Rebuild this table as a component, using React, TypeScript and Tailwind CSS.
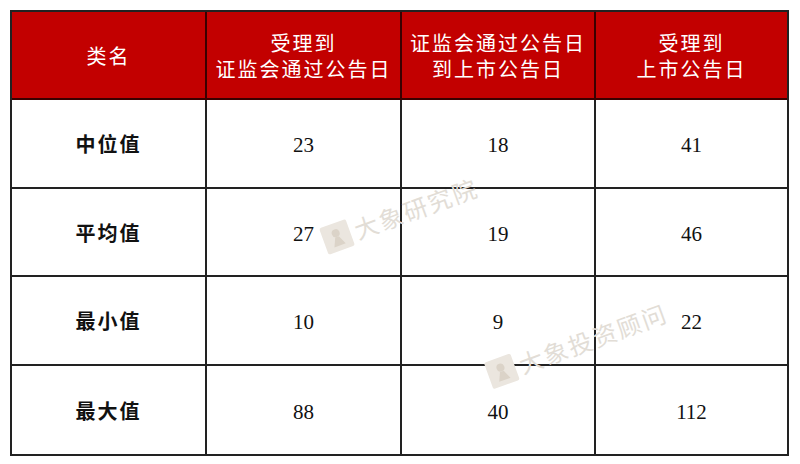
import React from 'react'

interface Row {
  name: string
  a: number
  b: number
  c: number
}

const rows: Row[] = [
  { name: '中位值', a: 23, b: 18, c: 41 },
  { name: '平均值', a: 27, b: 19, c: 46 },
  { name: '最小值', a: 10, b: 9, c: 22 },
  { name: '最大值', a: 88, b: 40, c: 112 },
]

const headers: string[][] = [
  ['类名'],
  ['受理到', '证监会通过公告日'],
  ['证监会通过公告日', '到上市公告日'],
  ['受理到', '上市公告日'],
]

const cjk = "font-['Liberation_Serif','Noto_Sans_CJK_SC',serif]"

function Watermark({ text, className }: { text: string; className: string }) {
  return (
    <div className={`absolute flex items-center gap-1 -rotate-[20deg] pointer-events-none select-none ${className}`}>
      <svg width="30" height="30" viewBox="0 0 30 30">
        <rect x="1" y="1" width="28" height="28" rx="2" fill="#ebe6df" />
        <path d="M9 24 L13 15 L17 15 L21 24 Z" fill="#dbd3c8" />
        <circle cx="15" cy="11" r="4" fill="#dbd3c8" />
      </svg>
      <span className="text-[24px] tracking-[2px] text-[#e2ddd6] font-['Noto_Sans_CJK_SC',sans-serif]">{text}</span>
    </div>
  )
}

export default function App() {
  return (
    <div className="relative w-[800px] h-[464px] bg-white pl-[10px] pt-[10px]">
      <div className={`w-[779px] border-2 border-[#222] ${cjk}`}>
        {/* header */}
        <div className="grid grid-cols-[195px_195px_194px_1fr] h-[88px] bg-[#c20000] border-b-2 border-[#3a0000]">
          {headers.map((lines, i) => (
            <div
              key={i}
              className={`flex flex-col items-center justify-center pt-[4px] text-white text-[20px] leading-[26px] tracking-[2px] ${
                i < 3 ? 'border-r-2 border-[#3a0000]' : ''
              }`}
            >
              {lines.map(l => (
                <span key={l}>{l}</span>
              ))}
            </div>
          ))}
        </div>

        {/* body */}
        {rows.map((r, idx) => (
          <div
            key={r.name}
            className={`grid grid-cols-[195px_195px_194px_1fr] h-[88.5px] text-[#111] ${
              idx < rows.length - 1 ? 'border-b-2 border-[#222]' : ''
            }`}
          >
            <div className="flex items-center justify-center pt-[4px] border-r-2 border-[#222] text-[20px] font-semibold tracking-[2px]">
              {r.name}
            </div>
            <div className="flex items-center justify-center pt-[5px] border-r-2 border-[#222] text-[21px]">{r.a}</div>
            <div className="flex items-center justify-center pt-[5px] border-r-2 border-[#222] text-[21px]">{r.b}</div>
            <div className="flex items-center justify-center pt-[5px] text-[21px]">{r.c}</div>
          </div>
        ))}
      </div>

      <Watermark text="大象研究院" className="left-[318px] top-[196px]" />
      <Watermark text="大象投资顾问" className="left-[482px] top-[326px]" />
    </div>
  )
}
